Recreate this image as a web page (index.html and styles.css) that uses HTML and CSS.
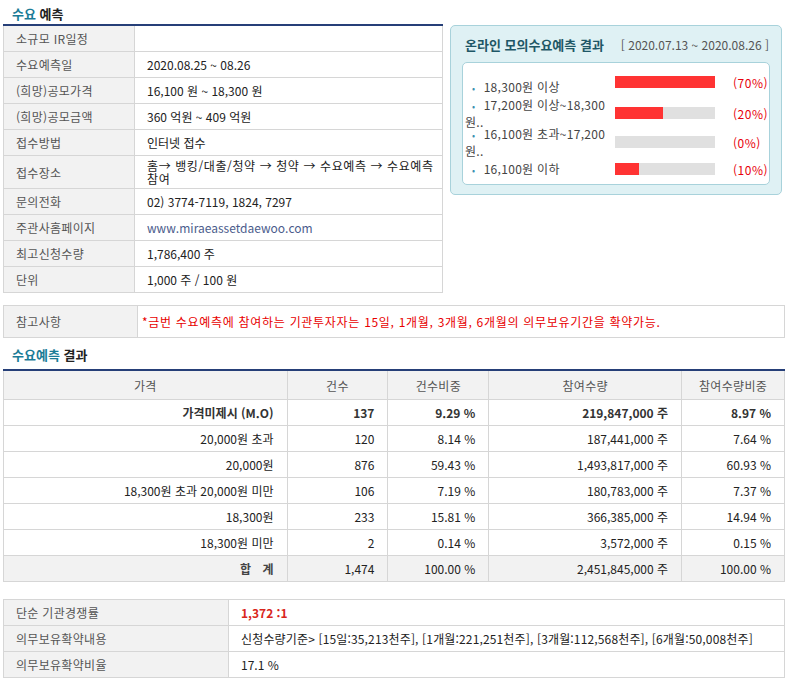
FILE: index.html
```html
<!DOCTYPE html>
<html lang="ko">
<head>
<meta charset="utf-8">
<title>수요예측</title>
<link rel="stylesheet" href="styles.css">
</head>
<body>
<div class="page">
  <div class="top">
    <div class="left">
      <h2 class="sec-title"><span class="hl">수요</span> 예측</h2>
      <table class="info">
        <tr><th>소규모 IR일정</th><td></td></tr>
        <tr><th>수요예측일</th><td>2020.08.25 ~ 08.26</td></tr>
        <tr><th>(희망)공모가격</th><td>16,100 원 ~ 18,300 원</td></tr>
        <tr><th>(희망)공모금액</th><td>360 억원 ~ 409 억원</td></tr>
        <tr><th>접수방법</th><td>인터넷 접수</td></tr>
        <tr class="tall"><th>접수장소</th><td class="wrap">홈→ 뱅킹/대출/청약 → 청약 → 수요예측 → 수요예측 참여</td></tr>
        <tr><th>문의전화</th><td>02) 3774-7119, 1824, 7297</td></tr>
        <tr><th>주관사홈페이지</th><td><a class="link" href="#">www.miraeassetdaewoo.com</a></td></tr>
        <tr><th>최고신청수량</th><td>1,786,400 주</td></tr>
        <tr><th>단위</th><td>1,000 주 / 100 원</td></tr>
      </table>
    </div>
    <div class="mock">
      <div class="mock-head">
        <h3>온라인 모의수요예측 결과</h3>
        <span class="period">[ 2020.07.13 ~ 2020.08.26 ]</span>
      </div>
      <div class="mock-body">
        <div class="mrow r1">
          <div class="mlabel low"><span class="dot">•</span> 18,300원 이상</div>
          <div class="bar"><div class="fill" style="width:100%"></div></div>
          <div class="pct">(70%)</div>
        </div>
        <div class="mrow r2">
          <div class="mlabel"><span class="dot">•</span> 17,200원 이상~18,300<br>원..</div>
          <div class="bar"><div class="fill" style="width:48%"></div></div>
          <div class="pct">(20%)</div>
        </div>
        <div class="mrow r3">
          <div class="mlabel"><span class="dot">•</span> 16,100원 초과~17,200<br>원..</div>
          <div class="bar"><div class="fill" style="width:0%"></div></div>
          <div class="pct">(0%)</div>
        </div>
        <div class="mrow r4">
          <div class="mlabel"><span class="dot">•</span> 16,100원 이하</div>
          <div class="bar"><div class="fill" style="width:24%"></div></div>
          <div class="pct">(10%)</div>
        </div>
      </div>
    </div>
  </div>

  <table class="note">
    <tr><th>참고사항</th><td>*금번 수요예측에 참여하는 기관투자자는 15일, 1개월, 3개월, 6개월의 의무보유기간을 확약가능.</td></tr>
  </table>

  <h2 class="sec-title second"><span class="hl">수요예측</span> 결과</h2>
  <table class="result">
    <colgroup>
      <col class="c1"><col class="c2"><col class="c3"><col class="c4"><col class="c5">
    </colgroup>
    <tr class="head"><th>가격</th><th>건수</th><th>건수비중</th><th>참여수량</th><th>참여수량비중</th></tr>
    <tr class="strong"><td>가격미제시 (M.O)</td><td>137</td><td>9.29 %</td><td>219,847,000 주</td><td>8.97 %</td></tr>
    <tr><td>20,000원 초과</td><td>120</td><td>8.14 %</td><td>187,441,000 주</td><td>7.64 %</td></tr>
    <tr><td>20,000원</td><td>876</td><td>59.43 %</td><td>1,493,817,000 주</td><td>60.93 %</td></tr>
    <tr><td>18,300원 초과 20,000원 미만</td><td>106</td><td>7.19 %</td><td>180,783,000 주</td><td>7.37 %</td></tr>
    <tr><td>18,300원</td><td>233</td><td>15.81 %</td><td>366,385,000 주</td><td>14.94 %</td></tr>
    <tr><td>18,300원 미만</td><td>2</td><td>0.14 %</td><td>3,572,000 주</td><td>0.15 %</td></tr>
    <tr class="total"><td><b class="sum">합 계</b></td><td>1,474</td><td>100.00 %</td><td>2,451,845,000 주</td><td>100.00 %</td></tr>
  </table>

  <table class="extra">
    <tr><th>단순 기관경쟁률</th><td><b class="rate">1,372 :1</b></td></tr>
    <tr><th>의무보유확약내용</th><td class="pledge">신청수량기준&gt; [15일:35,213천주], [1개월:221,251천주], [3개월:112,568천주], [6개월:50,008천주]</td></tr>
    <tr><th>의무보유확약비율</th><td>17.1 %</td></tr>
  </table>
</div>
</body>
</html>
```

FILE: styles.css
```css
html, body {
  margin: 0;
  padding: 0;
  background: #fff;
}
body {
  font-family: "Noto Sans CJK KR", "Noto Sans", sans-serif;
  font-size: 12px;
  color: #222;
}
.page {
  width: 782px;
  padding: 0 4px 0 3px;
}
.top {
  display: flex;
  align-items: flex-start;
}
.left {
  width: 440px;
  flex-shrink: 0;
}
.sec-title {
  margin: 0;
  padding: 3px 0 0 9px;
  height: 21px;
  line-height: 21px;
  font-size: 13px;
  font-weight: bold;
  color: #222;
  border-bottom: 2px solid #263f78;
}
.sec-title .hl {
  color: #1b7c97;
}
.sec-title.second {
  padding-top: 6px;
  height: 25px;
}
table {
  border-collapse: collapse;
  width: 100%;
}
th, td {
  border: 1px solid #d6d6d6;
  height: 25px;
  padding: 0 12px;
  line-height: 13px;
  text-align: left;
  font-weight: normal;
}
th {
  letter-spacing: 0.3px;
}
.info {
  border-top: none;
}
.info tr:first-child th, .info tr:first-child td {
  border-top: none;
}
.info th {
  width: 106px;
  background: #f2f2f2;
  color: #555;
}
.info td {
  color: #222;
}
.info tr.tall td, .info tr.tall th {
  padding-top: 3px;
  padding-bottom: 3px;
}
.info td.wrap {
  letter-spacing: 0.6px;
  padding-right: 4px;
}
.link {
  color: #4b5c8c;
  text-decoration: none;
}

.mock {
  width: 308px;
  flex-shrink: 0;
  margin: 25px 0 0 7px;
  height: 168px;
  background: #dff1f4;
  border: 1px solid #a8d2db;
  border-radius: 5px;
  padding: 0 11px;
}
.mock-head {
  display: flex;
  justify-content: space-between;
  align-items: center;
  height: 36px;
  padding: 0 0 0 3px;
}
.mock-head h3 {
  margin: 0;
  font-size: 13px;
  font-weight: bold;
  color: #1e5766;
}
.period {
  color: #555;
  font-size: 12px;
  margin-right: 1px;
}
.mock-body {
  background: #fff;
  border: 1px solid #a8d2db;
  border-radius: 5px;
  height: 121px;
  padding: 0 2px;
}
.mrow {
  display: flex;
  align-items: center;
}
.r1 { height: 36px; margin-top: 1px; }
.r2 { height: 26px; margin-top: 0; }
.r3 { height: 26px; margin-top: 3px; }
.r4 { height: 20px; margin-top: 4px; }
.mlabel {
  width: 150px;
  flex-shrink: 0;
  color: #444;
  line-height: 15px;
  letter-spacing: 0.3px;
}
.mlabel.low {
  padding-top: 10px;
}
.dot {
  display: inline-block;
  color: #3b8fb0;
  font-size: 9px;
  margin-left: 7px;
  width: 8px;
}
.bar {
  width: 100px;
  height: 12px;
  background: #e0e0e0;
  flex-shrink: 0;
}
.fill {
  height: 100%;
  background: #ff3333;
}
.pct {
  margin-left: 18px;
  color: #e8000b;
  letter-spacing: 0.5px;
}

.note {
  margin-top: 12px;
}
.note th {
  width: 109px;
  background: #f2f2f2;
  color: #555;
  height: 31px;
}
.note td {
  color: #e80000;
  padding-left: 4px;
  letter-spacing: 0.7px;
}

.result th, .result td {
  text-align: right;
  padding: 0 13px 0 8px;
  color: #222;
}
.result .c1 { width: 284px; }
.result .c2 { width: 101px; }
.result .c3 { width: 101px; }
.result .c4 { width: 193px; }
.result .c5 { width: 103px; }
.result tr.head th {
  background: #f2f2f2;
  text-align: center;
  height: 28px;
  color: #555;
  padding: 0;
  border-top: none;
}
.result tr.strong td {
  font-weight: bold;
  color: #333;
}
.result tr.total td {
  background: #f2f2f2;
}
.sum {
  letter-spacing: 4px;
  margin-right: -4px;
  color: #444;
}

.extra {
  margin-top: 17px;
}
.extra th {
  width: 200px;
  background: #f2f2f2;
  color: #555;
}
.extra td.pledge {
  letter-spacing: 0.15px;
}
.rate {
  color: #d9261c;
}
```
